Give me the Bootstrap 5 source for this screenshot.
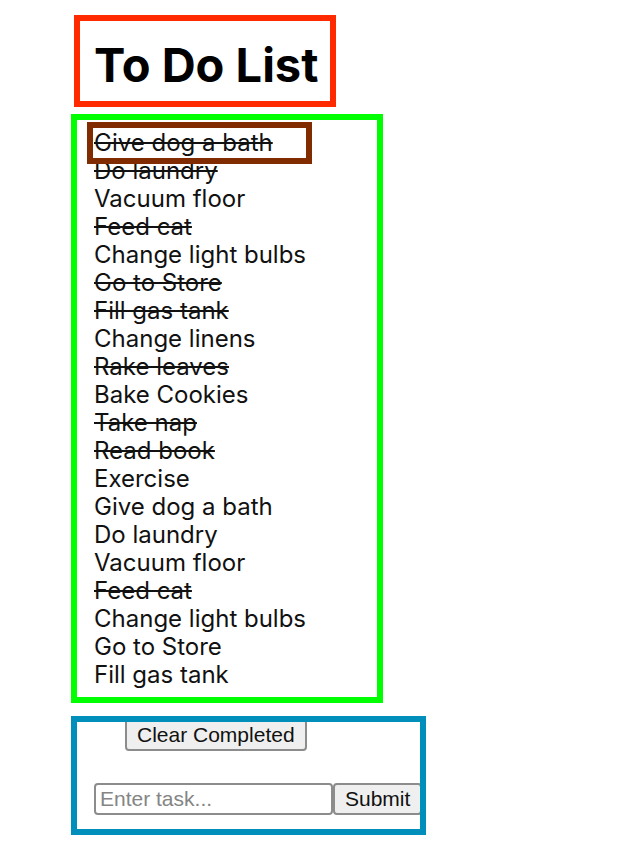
<!DOCTYPE html>
<html lang="en">
<head>
<meta charset="utf-8">
<meta name="viewport" content="width=device-width, initial-scale=1">
<title>To Do List</title>
<link href="https://cdn.jsdelivr.net/npm/bootstrap@5.3.0/dist/css/bootstrap.min.css" rel="stylesheet">
<style>
  body { font-family: Inter, "Liberation Sans", sans-serif; color: #111; background: #fff; }
  .page { padding: 15px 24px 20px 71px; }
  .frame { border: 6px solid; width: fit-content; max-width: 100%; }
  .frame-title { border-color: #ff2a00; margin-left: 3px; padding: 16px 12px 8px 14px; }
  .frame-title h1 { font-size: 47px; line-height: 56px; font-weight: 700; color: #000; }
  .frame-list { border-color: #0f0; margin-top: 7px; padding: 9px 71px 8px 17px; }
  .tasks { font-size: 24px; line-height: 28px; }
  .done { text-decoration: line-through; text-decoration-thickness: 2px; }
  .frame-item { border: 6px solid #802b00; margin: -7px -6px -7px -7px; padding: 1px 0 1px 1px; z-index: 1; }
  .frame-form { border-color: #008fba; margin-top: 13px; padding: 0 0 14px 17px; }
  .control { font-family: "Liberation Sans", sans-serif; font-size: 21px; line-height: 28px; border: 2px solid #8c8c8c; border-radius: 4px; color: #111; }
  .control-btn { background: #efefef; padding: 0 10px; }
  .control-btn:hover { background: #e3e3e3; }
  .clear { margin: -3px 0 0 31px; }
  .entry { margin-top: 32px; margin-right: -2px; }
  .entry-text { width: 239px; padding: 0 4px; background: #fff; }
  .entry-text::placeholder { color: #858585; opacity: 1; }
</style>
</head>
<body>
<main class="page">
  <header class="frame frame-title"><h1 class="m-0 text-nowrap">To Do List</h1></header>

  <section class="frame frame-list" aria-label="Tasks">
    <ul class="tasks list-unstyled m-0">
      <li class="frame-item position-relative"><span class="done">Give dog a bath</span></li>
      <li class="done">Do laundry</li>
      <li>Vacuum floor</li>
      <li class="done">Feed cat</li>
      <li>Change light bulbs</li>
      <li class="done">Go to Store</li>
      <li class="done">Fill gas tank</li>
      <li>Change linens</li>
      <li class="done">Rake leaves</li>
      <li>Bake Cookies</li>
      <li class="done">Take nap</li>
      <li class="done">Read book</li>
      <li>Exercise</li>
      <li>Give dog a bath</li>
      <li>Do laundry</li>
      <li>Vacuum floor</li>
      <li class="done">Feed cat</li>
      <li>Change light bulbs</li>
      <li>Go to Store</li>
      <li>Fill gas tank</li>
    </ul>
  </section>

  <section class="frame frame-form overflow-hidden" aria-label="Task actions">
    <button type="button" class="control control-btn clear d-block">Clear Completed</button>
    <form class="entry d-flex">
      <input id="task" type="text" class="control entry-text" placeholder="Enter task..." aria-label="Task">
      <button type="submit" class="control control-btn">Submit</button>
    </form>
  </section>
</main>
<script src="https://cdn.jsdelivr.net/npm/bootstrap@5.3.0/dist/js/bootstrap.bundle.min.js"></script>
</body>
</html>
